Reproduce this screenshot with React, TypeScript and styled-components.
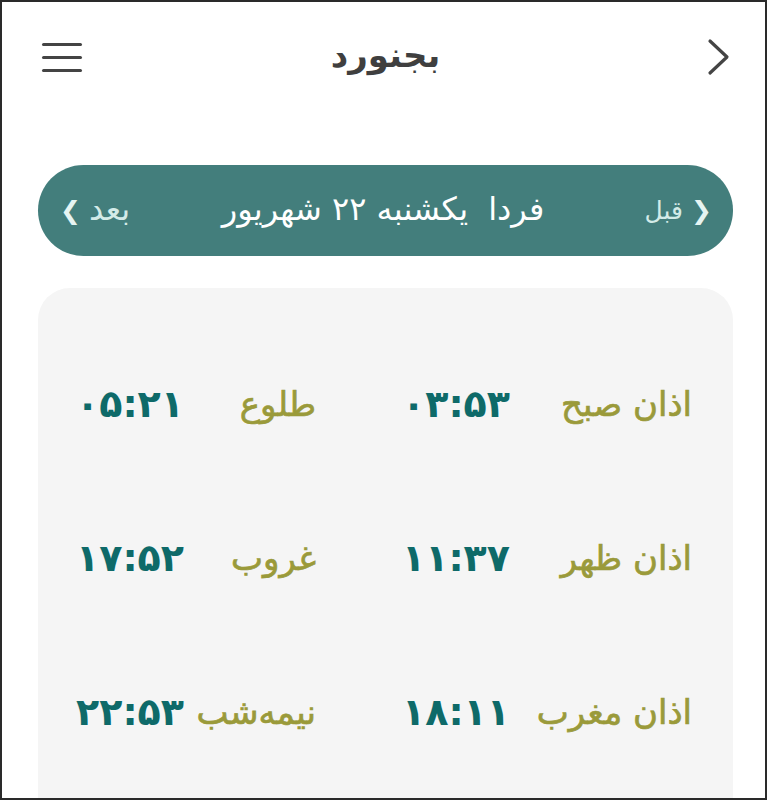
import React from "react";
import styled, { createGlobalStyle } from "styled-components";

const GlobalStyle = createGlobalStyle`
  html, body {
    margin: 0;
    padding: 0;
    background: #ffffff;
  }
  body {
    font-family: "DejaVu Sans", "Noto Sans", sans-serif;
  }
`;

const times = [
  [
    { label: "اذان صبح", time: "۰۳:۵۳" },
    { label: "طلوع", time: "۰۵:۲۱" },
  ],
  [
    { label: "اذان ظهر", time: "۱۱:۳۷" },
    { label: "غروب", time: "۱۷:۵۲" },
  ],
  [
    { label: "اذان مغرب", time: "۱۸:۱۱" },
    { label: "نیمه‌شب", time: "۲۲:۵۳" },
  ],
];

function App() {
  return (
    <>
      <GlobalStyle />
      <Frame dir="rtl">
        <Header>
          <BackButton aria-label="بازگشت">
            <svg width="24" height="38" viewBox="0 0 24 38">
              <path
                d="M3 3 L20 19 L3 35"
                fill="none"
                stroke="#444"
                strokeWidth="3.2"
                strokeLinecap="round"
                strokeLinejoin="round"
              />
            </svg>
          </BackButton>
          <Title>بجنورد</Title>
          <MenuButton aria-label="منو">
            <span />
            <span />
            <span />
          </MenuButton>
        </Header>

        <DayBar>
          <NavLink>
            <Arrow>❮</Arrow>
            قبل
          </NavLink>
          <DayTitle>
            <span>فردا</span>
            <span>یکشنبه ۲۲ شهریور</span>
          </DayTitle>
          <NavLink $end>
            <NavText $size={32}>بعد</NavText>
            <Arrow>❯</Arrow>
          </NavLink>
        </DayBar>

        <Card>
          {times.map((row, i) => (
            <Row key={i}>
              {row.map((item) => (
                <React.Fragment key={item.label}>
                  <Label>{item.label}</Label>
                  <Time>{item.time}</Time>
                </React.Fragment>
              ))}
            </Row>
          ))}
        </Card>
      </Frame>
    </>
  );
}

const Frame = styled.div`
  box-sizing: border-box;
  height: 800px;
  border: 2px solid #2a2a2a;
  padding: 0 32px 0 36px;
  overflow: hidden;
  background: #ffffff;
`;

const Header = styled.header`
  display: grid;
  grid-template-columns: 60px 1fr 60px;
  align-items: center;
  height: 112px;
`;

const BackButton = styled.div`
  justify-self: start;
  display: flex;
  margin-right: 2px;
  margin-top: -2px;
`;

const Title = styled.h1`
  margin: 0;
  text-align: center;
  font-size: 34px;
  font-weight: 700;
  color: #3f3f3f;
  margin-top: -6px;
`;

const MenuButton = styled.div`
  justify-self: end;
  display: flex;
  flex-direction: column;
  gap: 10px;
  margin-left: 4px;
  margin-top: -2px;

  span {
    display: block;
    width: 40px;
    height: 3px;
    border-radius: 2px;
    background: #444444;
  }
`;

const DayBar = styled.div`
  margin-top: 51px;
  height: 91px;
  border-radius: 46px;
  background: #437e7c;
  display: grid;
  grid-template-columns: 1fr auto 1fr;
  align-items: center;
  padding: 0 21px 0 22px;
`;

const NavLink = styled.div<{ $end?: boolean }>`
  display: flex;
  align-items: center;
  justify-content: ${(p) => (p.$end ? "flex-end" : "flex-start")};
  gap: 8px;
  color: #d3ebe8;
  font-size: 25px;
`;

const NavText = styled.span<{ $size: number }>`
  font-size: ${(p) => p.$size}px;
  margin-top: -4px;
`;

const Arrow = styled.span`
  font-size: 25px;
  color: #e6f4f2;
`;

const DayTitle = styled.div`
  display: flex;
  gap: 20px;
  color: #ffffff;
  font-size: 32px;
  margin-left: -6px;
  margin-top: -4px;
`;

const Card = styled.section`
  margin-top: 32px;
  height: 530px;
  border-radius: 32px;
  background: #f5f5f5;
  padding: 39px 41px 0 20px;
`;

const Row = styled.div`
  display: grid;
  grid-template-columns: 182px 194px 132px 1fr;
  align-items: center;
  height: 154px;
`;

const Label = styled.div`
  font-size: 34px;
  color: #9a9a3a;
  text-align: right;
  -webkit-text-stroke: 0.7px #9a9a3a;
`;

const Time = styled.div`
  font-size: 38px;
  font-weight: 700;
  color: #0e6a69;
  text-align: right;
`;

export default App;
